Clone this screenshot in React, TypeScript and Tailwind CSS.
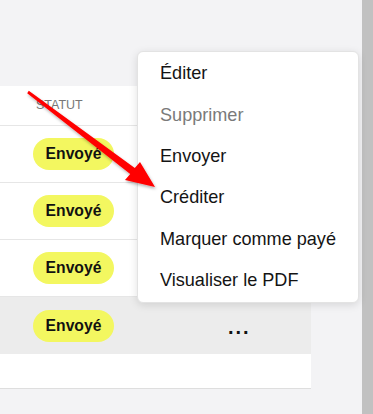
import React from "react";

const rows = [false, false, false, true];

export default function App() {
  return (
    <div className="relative w-[373px] h-[414px] overflow-hidden bg-[#f3f3f5] font-['Liberation_Sans',Arial,sans-serif]">
      <div className="flex h-full">
        <div className="flex-1 pt-[86px]">
          <div className="w-[311px] bg-white border-b border-[#dedede]">
            <div className="h-[40px] border-b border-[#e6e6e6] flex items-center pl-[36px]">
              <span className="text-[12.5px] text-[#777777]">STATUT</span>
            </div>
            {rows.map((hl, i) => (
              <div
                key={i}
                className={`h-[57px] flex items-center pl-[33px] ${hl ? "bg-[#ececec]" : "border-b border-[#e6e6e6]"}`}
              >
                <div className="w-[81px] h-[32px] rounded-full bg-[#f3f760] flex items-center justify-center">
                  <span className="text-[15.7px] font-bold text-[#111]">Envoyé</span>
                </div>
                {hl && (
                  <span className="ml-[114px] mt-[2px] text-[20px] font-bold leading-none text-[#111] tracking-[2px]">...</span>
                )}
              </div>
            ))}
            <div className="h-[34px]" />
          </div>
        </div>
        <div className="w-[11px] bg-[#c1c1c1]" />
      </div>

      <div className="absolute left-[137px] top-[51px] w-[222px] rounded-[6px] border border-[#e3e3e3] bg-white py-[1px] shadow-[0_2px_8px_rgba(0,0,0,0.12)]">
        {[
          ["Éditer", false],
          ["Supprimer", true],
          ["Envoyer", false],
          ["Créditer", false],
          ["Marquer comme payé", false],
          ["Visualiser le PDF", false],
        ].map(([label, dis]) => (
          <div
            key={label as string}
            className={`h-[41.4px] flex items-center pl-[22px] text-[18.1px] ${dis ? "text-[#7a7a7a]" : "text-[#141414]"}`}
          >
            {label}
          </div>
        ))}
      </div>

      <svg className="absolute left-0 top-0 pointer-events-none" width="373" height="414" viewBox="0 0 373 414">
        <defs>
          <filter id="sh" x="-20%" y="-20%" width="140%" height="140%">
            <feDropShadow dx="1" dy="2" stdDeviation="1.5" floodColor="#000" floodOpacity="0.3" />
          </filter>
        </defs>
        <polygon
          filter="url(#sh)"
          fill="#ff0000"
          points="28.8,90.8 134.8,168 140,162 155,187 125,180 130.2,174 27.2,93.2"
        />
      </svg>
    </div>
  );
}
